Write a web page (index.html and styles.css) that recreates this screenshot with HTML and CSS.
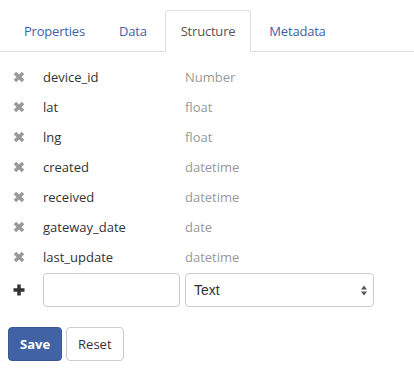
FILE: index.html
```html
<!DOCTYPE html>
<html lang="en">

<head>
    <meta charset="UTF-8">
    <meta name="viewport" content="width=device-width, initial-scale=1.0">
    <title>Structure</title>
    <link rel="stylesheet" href="styles.css">
</head>

<body>
    <ul class="onglets">
        <li><a href="#">Properties</a></li>
        <li><a href="#">Data</a></li>
        <li class="actif"><a href="#">Structure</a></li>
        <li><a href="#">Metadata</a></li>
    </ul>

    <div class="champs">
        <div class="champ">
            <span class="icone-suppr"><svg width="12" height="12" viewBox="0 0 12 12"><path d="M2 2 L10 10 M10 2 L2 10" /></svg></span>
            <span class="nom">device_id</span>
            <span class="type">Number</span>
        </div>
        <div class="champ">
            <span class="icone-suppr"><svg width="12" height="12" viewBox="0 0 12 12"><path d="M2 2 L10 10 M10 2 L2 10" /></svg></span>
            <span class="nom">lat</span>
            <span class="type">float</span>
        </div>
        <div class="champ">
            <span class="icone-suppr"><svg width="12" height="12" viewBox="0 0 12 12"><path d="M2 2 L10 10 M10 2 L2 10" /></svg></span>
            <span class="nom">lng</span>
            <span class="type">float</span>
        </div>
        <div class="champ">
            <span class="icone-suppr"><svg width="12" height="12" viewBox="0 0 12 12"><path d="M2 2 L10 10 M10 2 L2 10" /></svg></span>
            <span class="nom">created</span>
            <span class="type">datetime</span>
        </div>
        <div class="champ">
            <span class="icone-suppr"><svg width="12" height="12" viewBox="0 0 12 12"><path d="M2 2 L10 10 M10 2 L2 10" /></svg></span>
            <span class="nom">received</span>
            <span class="type">datetime</span>
        </div>
        <div class="champ">
            <span class="icone-suppr"><svg width="12" height="12" viewBox="0 0 12 12"><path d="M2 2 L10 10 M10 2 L2 10" /></svg></span>
            <span class="nom">gateway_date</span>
            <span class="type">date</span>
        </div>
        <div class="champ">
            <span class="icone-suppr"><svg width="12" height="12" viewBox="0 0 12 12"><path d="M2 2 L10 10 M10 2 L2 10" /></svg></span>
            <span class="nom">last_update</span>
            <span class="type">datetime</span>
        </div>

        <div class="champ nouveau">
            <span class="icone-ajout"><svg width="12" height="12" viewBox="0 0 12 12"><path d="M6 0.5 V11.5 M0.5 6 H11.5" /></svg></span>
            <input type="text" class="input-nom">
            <div class="select-type">
                <span>Text</span>
                <svg width="6" height="11" viewBox="0 0 6 11"><path d="M0 4.5 L3 0.5 L6 4.5 Z M0 6.5 L3 10.5 L6 6.5 Z" /></svg>
            </div>
        </div>
    </div>

    <div class="boutons">
        <button class="bouton-save">Save</button>
        <button class="bouton-reset">Reset</button>
    </div>
</body>

</html>
```

FILE: styles.css
```css
body {
    font-family: "Open Sans", sans-serif;
    font-size: 13px;
    color: #333;
    background-color: #fff;
    margin: 0;
    padding: 10px 0 0 0;
}

.onglets {
    display: flex;
    list-style: none;
    margin: 0;
    padding: 0 0 0 8px;
    border-bottom: 1px solid #ddd;
}

.onglets li {
    margin: 0 2px -1px 0;
}

.onglets a {
    display: block;
    height: 40px;
    line-height: 40px;
    padding: 0 15px;
    color: #3f5fa6;
    letter-spacing: -0.2px;
    text-decoration: none;
    border: 1px solid transparent;
    border-radius: 4px 4px 0 0;
}

.onglets .actif a {
    color: #555;
    background-color: #fff;
    border-color: #ddd;
    border-bottom-color: transparent;
}

.champs {
    padding: 10px 0 0 13px;
}

.champ {
    display: flex;
    align-items: center;
    height: 30px;
}

.icone-suppr,
.icone-ajout {
    width: 30px;
    display: flex;
    align-items: center;
}

.icone-suppr path {
    stroke: #999;
    stroke-width: 3.5;
}

.icone-ajout path {
    stroke: #333;
    stroke-width: 3.5;
}

.nom {
    width: 142px;
}

.type {
    color: #999;
}

.nouveau {
    height: 34px;
    margin-top: 1px;
}

.input-nom {
    box-sizing: border-box;
    width: 137px;
    height: 34px;
    border: 1px solid #ccc;
    border-radius: 4px;
    margin: 0 5px 0 0;
    padding: 6px 12px;
}

.select-type {
    box-sizing: border-box;
    width: 189px;
    height: 34px;
    border: 1px solid #ccc;
    border-radius: 4px;
    padding: 0 6px 0 8px;
    display: flex;
    align-items: center;
    justify-content: space-between;
    font-family: "Liberation Sans", Arial, sans-serif;
    font-size: 14px;
    color: #333;
}

.select-type path {
    fill: #555;
}

.boutons {
    display: flex;
    gap: 4px;
    padding: 20px 0 0 8px;
}

.boutons button {
    height: 34px;
    padding: 0 11px;
    border-radius: 4px;
    font-family: "Open Sans", sans-serif;
    font-size: 13px;
    cursor: pointer;
}

.bouton-save {
    background-color: #4163a6;
    border: 1px solid #3a5894;
    color: #fff;
    font-weight: bold;
}

.bouton-reset {
    background-color: #fff;
    border: 1px solid #ccc;
    color: #333;
}
```
